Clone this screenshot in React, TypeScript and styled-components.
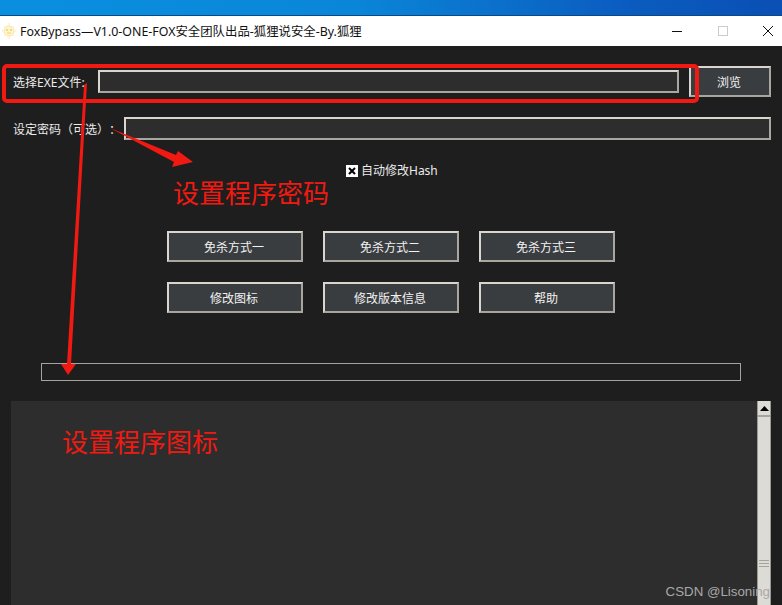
import React from 'react';
import styled, { createGlobalStyle } from 'styled-components';

const GlobalStyle = createGlobalStyle`
    html, body {
        margin: 0;
        padding: 0;
        background: #1e1e1e;
    }
    body {
        font-family: "Noto Sans", "Noto Sans CJK SC", sans-serif;
        text-spacing-trim: space-all;
    }
`;

const Page = styled.div`
    position: relative;
    width: 782px;
    height: 605px;
    overflow: hidden;
    background: #1e1e1e;
`;

const DesktopStrip = styled.div`
    height: 15px;
    background: linear-gradient(90deg, #0a8fe0 0%, #0a86d8 45%, #0b5cc0 80%, #0a4fb4 100%);
    border-bottom: 1px solid #0b4a80;
`;

const TitleBar = styled.div`
    display: flex;
    align-items: center;
    height: 30px;
    background: #fff;
    color: #111;
    font-size: 12.4px;
    padding-left: 1px;
`;

const TitleText = styled.span`
    flex: 1;
    margin-left: 3px;
    white-space: nowrap;
`;

const WindowControls = styled.div`
    display: flex;
    align-items: center;
    margin-right: -9px;
`;

const WindowControl = styled.div`
    display: flex;
    align-items: center;
    justify-content: center;
    width: 45.5px;
    height: 30px;
`;

const Content = styled.div`
    display: flex;
    flex-direction: column;
    height: 559px;
    padding: 0 11px;
    color: #ececec;
    font-size: 12px;
    box-sizing: border-box;
`;

const FileRow = styled.div`
    display: flex;
    align-items: center;
    height: 31px;
    margin-top: 20px;
`;

const PasswordRow = styled.div`
    display: flex;
    align-items: center;
    height: 23px;
    margin-top: 20px;
`;

const FieldLabel = styled.label<{ $width: number }>`
    width: ${(p) => p.$width}px;
    padding-left: 2px;
    box-sizing: border-box;
    white-space: nowrap;
    flex: none;
`;

const TextField = styled.div<{ $width: number }>`
    width: ${(p) => p.$width}px;
    height: 23px;
    box-sizing: border-box;
    background: #2d2d2d;
    border: 2px solid;
    border-color: #d8d6cf #a8a69e #a8a69e #d8d6cf;
    flex: none;
`;

const ActionButton = styled.button<{ $width?: number }>`
    width: ${(p) => p.$width ?? 136}px;
    height: 31px;
    box-sizing: border-box;
    background: #3a3d40;
    color: #f2f2f2;
    border: 2px solid;
    border-color: #d8d6cf #a8a69e #a8a69e #d8d6cf;
    font: inherit;
    padding: 0 2px 0 0;
    flex: none;
`;

const BrowseButton = styled(ActionButton)`
    margin-left: 10px;
`;

const CheckRow = styled.div`
    display: flex;
    align-items: center;
    gap: 3px;
    height: 14px;
    margin-top: 23px;
    margin-left: 335px;
`;

const CheckBox = styled.span`
    display: block;
    width: 12px;
    height: 12px;
`;

const ButtonGrid = styled.div`
    display: grid;
    grid-template-columns: repeat(3, 136px);
    column-gap: 20px;
    row-gap: 20px;
    margin-top: 54px;
    margin-left: 156px;
`;

const ProgressTrack = styled.div`
    width: 700px;
    height: 18px;
    box-sizing: border-box;
    border: 1px solid #a5a39b;
    background: #1e1e1e;
    margin-top: 50px;
    margin-left: 30px;
`;

const LogPanel = styled.div`
    display: flex;
    justify-content: flex-end;
    flex: 1;
    margin-top: 20px;
    background: #2d2d2d;
`;

const ScrollBar = styled.div`
    display: flex;
    flex-direction: column;
    width: 14px;
    box-sizing: border-box;
    background: #dcdbd5;
    border-left: 1px solid #9b9992;
    border-right: 1px solid #9b9992;
`;

const ScrollUp = styled.div`
    display: flex;
    align-items: center;
    justify-content: center;
    height: 14px;
    border-bottom: 2px solid #a5a39b;
    margin-bottom: 1px;
`;

const ScrollGrip = styled.div`
    width: 10px;
    height: 9px;
    margin: 142px auto 0;
    background: repeating-linear-gradient(180deg, #a5a39b 0 1px, #dcdbd5 1px 3px);
`;

const Annotations = styled.svg`
    position: absolute;
    top: 0;
    left: 0;
    pointer-events: none;
`;

const Note = styled.div<{ $left: number; $top: number }>`
    position: absolute;
    left: ${(p) => p.$left}px;
    top: ${(p) => p.$top}px;
    color: #f01a12;
    font-size: 26px;
    line-height: 30px;
    white-space: nowrap;
`;

const Watermark = styled.div`
    position: absolute;
    right: 12px;
    bottom: 6px;
    color: #a9a9a9;
    font-family: "Liberation Sans", sans-serif;
    font-size: 13.3px;
    white-space: nowrap;
`;

function FoxIcon() {
    return (
        <svg width="16" height="18" viewBox="0 0 16 18" fill="none">
            <circle cx="8" cy="9" r="5" fill="#fdf6d2" stroke="#f8e59a" strokeWidth="1" />
            <path d="M8 1v2M8 15v2M1 9h1M14 9h1M3 4l1 1M13 4l-1 1M3 14l1-1M13 14l-1-1" stroke="#fbeaa8" strokeWidth="1" />
            <circle cx="6" cy="8" r="1" fill="#f2cf6a" />
            <circle cx="10" cy="8" r="1" fill="#f2cf6a" />
            <path d="M6 11h4" stroke="#f2cf6a" strokeWidth="1" />
        </svg>
    );
}

export default function App() {
    return (
        <Page>
            <GlobalStyle />
            <DesktopStrip />
            <TitleBar>
                <FoxIcon />
                <TitleText>FoxBypass—V1.0-ONE-FOX安全团队出品-狐狸说安全-By.狐狸</TitleText>
                <WindowControls>
                    <WindowControl>
                        <svg width="10" height="10" viewBox="0 0 10 10"><path d="M0 5.5h10" stroke="#111" /></svg>
                    </WindowControl>
                    <WindowControl>
                        <svg width="10" height="10" viewBox="0 0 10 10"><rect x="0.5" y="0.5" width="9" height="9" fill="none" stroke="#ccc" /></svg>
                    </WindowControl>
                    <WindowControl>
                        <svg width="10" height="10" viewBox="0 0 10 10"><path d="M0 0l10 10M10 0L0 10" stroke="#111" /></svg>
                    </WindowControl>
                </WindowControls>
            </TitleBar>
            <Content>
                <FileRow>
                    <FieldLabel $width={87}>选择EXE文件:</FieldLabel>
                    <TextField $width={581} />
                    <BrowseButton $width={82}>浏览</BrowseButton>
                </FileRow>
                <PasswordRow>
                    <FieldLabel $width={113}>设定密码（可选）：</FieldLabel>
                    <TextField $width={647} />
                </PasswordRow>
                <CheckRow>
                    <CheckBox>
                        <svg width="12" height="12" viewBox="0 0 12 12">
                            <rect width="12" height="12" fill="#fff" />
                            <path d="M3 3l6 6M9 3l-6 6" stroke="#000" strokeWidth="2" />
                        </svg>
                    </CheckBox>
                    <span>自动修改Hash</span>
                </CheckRow>
                <ButtonGrid>
                    <ActionButton>免杀方式一</ActionButton>
                    <ActionButton>免杀方式二</ActionButton>
                    <ActionButton>免杀方式三</ActionButton>
                    <ActionButton>修改图标</ActionButton>
                    <ActionButton>修改版本信息</ActionButton>
                    <ActionButton>帮助</ActionButton>
                </ButtonGrid>
                <ProgressTrack />
                <LogPanel>
                    <ScrollBar>
                        <ScrollUp>
                            <svg width="9" height="5" viewBox="0 0 9 5"><path d="M4.5 0L9 5H0z" fill="#000" /></svg>
                        </ScrollUp>
                        <ScrollGrip />
                    </ScrollBar>
                </LogPanel>
            </Content>
            <Annotations width="782" height="605" viewBox="0 0 782 605">
                <rect x="4" y="66" width="693" height="35" rx="3" fill="none" stroke="#f01a12" strokeWidth="4" />
                <path d="M110 128L176 155L178 151L193 162L172 167L174 162Z" fill="#f01a12" />
                <path d="M87 83L84 85L67 364L61 364L68 375L76 364L71 364Z" fill="#f01a12" />
            </Annotations>
            <Note $left={173} $top={178}>设置程序密码</Note>
            <Note $left={62} $top={427}>设置程序图标</Note>
            <Watermark>CSDN @Lisoning</Watermark>
        </Page>
    );
}
